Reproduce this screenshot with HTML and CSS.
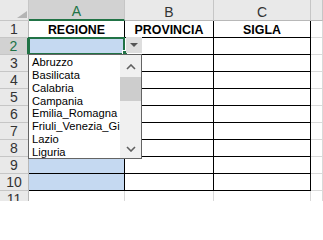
FILE: index.html
```html
<!DOCTYPE html>
<html>
<head>
<meta charset="utf-8">
<link rel="stylesheet" href="styles.css">
</head>
<body>
<div class="sheet">
  <div class="grid">
    <div class="hd corner"><span class="tri"></span></div>
    <div class="hd col sel">A</div>
    <div class="hd col">B</div>
    <div class="hd col">C</div>
    <div class="hd col last"></div>

    <div class="hd row">1</div><div class="c t th">REGIONE</div><div class="c t th">PROVINCIA</div><div class="c t th">SIGLA</div><div class="c"></div>
    <div class="hd row sel">2</div><div class="c t blue"></div><div class="c t"></div><div class="c t"></div><div class="c"></div>
    <div class="hd row">3</div><div class="c t blue"></div><div class="c t"></div><div class="c t"></div><div class="c"></div>
    <div class="hd row">4</div><div class="c t blue"></div><div class="c t"></div><div class="c t"></div><div class="c"></div>
    <div class="hd row">5</div><div class="c t blue"></div><div class="c t"></div><div class="c t"></div><div class="c"></div>
    <div class="hd row">6</div><div class="c t blue"></div><div class="c t"></div><div class="c t"></div><div class="c"></div>
    <div class="hd row">7</div><div class="c t blue"></div><div class="c t"></div><div class="c t"></div><div class="c"></div>
    <div class="hd row">8</div><div class="c t blue"></div><div class="c t"></div><div class="c t"></div><div class="c"></div>
    <div class="hd row">9</div><div class="c t blue"></div><div class="c t"></div><div class="c t"></div><div class="c"></div>
    <div class="hd row">10</div><div class="c t blue"></div><div class="c t"></div><div class="c t"></div><div class="c"></div>
    <div class="hd row">11</div><div class="c"></div><div class="c"></div><div class="c"></div><div class="c"></div>
  </div>

  <div class="selbox"></div>
  <div class="handle"></div>
  <div class="ddbtn"><span class="ddtri"></span></div>

  <div class="list">
    <div class="items">
      <div>Abruzzo</div>
      <div>Basilicata</div>
      <div>Calabria</div>
      <div>Campania</div>
      <div>Emilia_Romagna</div>
      <div>Friuli_Venezia_Gi</div>
      <div>Lazio</div>
      <div>Liguria</div>
    </div>
    <div class="sb">
      <div class="btn up"><svg width="10" height="6" viewBox="0 0 10 6"><polyline points="1,5 5,1 9,5" fill="none" stroke="#606060" stroke-width="1.6"/></svg></div>
      <div class="thumb"></div>
      <div class="track"></div>
      <div class="btn down"><svg width="10" height="6" viewBox="0 0 10 6"><polyline points="1,1 5,5 9,1" fill="none" stroke="#606060" stroke-width="1.6"/></svg></div>
    </div>
  </div>
</div>
</body>
</html>
```
FILE: styles.css
```css
body {
  margin: 0;
  overflow: hidden;
  background: #fff;
  font-family: "Liberation Sans", Arial, sans-serif;
}
.sheet {
  position: relative;
  width: 323px;
  height: 201px;
  overflow: hidden;
}
.grid {
  display: grid;
  grid-template-columns: 29px 96px 89px 97px 1fr;
  grid-template-rows: 21px repeat(11, 17px);
}
.grid > div {
  box-sizing: border-box;
  border-right: 1px solid #d9d9d9;
  border-bottom: 1px solid #d9d9d9;
}
.grid > .hd {
  background: #e9e9e9;
  border-right-color: #c6c6c6;
  border-bottom-color: #c6c6c6;
  color: #333;
  font-size: 14px;
  display: flex;
  justify-content: center;
  align-items: flex-end;
}
.grid > .col {
  border-bottom-color: #b8b8b8;
}
.grid > .row {
  border-right-color: #b8b8b8;
  line-height: 15px;
}
.grid > .corner {
  justify-content: flex-end;
  padding: 0 1px 2px 0;
}
.tri {
  width: 0;
  height: 0;
  border-left: 10px solid transparent;
  border-bottom: 7px solid #b4b4b4;
}
.grid > .hd.sel {
  background: #d2d2d2;
  color: #217346;
}
.grid > .col.sel {
  border-bottom: 2px solid #217346;
}
.grid > .row.sel {
  border-right: 2px solid #217346;
}
.grid > .c.t {
  border-right-color: #000;
  border-bottom-color: #000;
}
.blue {
  background: #c5d9f1;
}
.th {
  font-weight: bold;
  font-size: 12.4px;
  color: #000;
  display: flex;
  align-items: flex-end;
  justify-content: center;
}
.selbox {
  position: absolute;
  left: 28px;
  top: 37px;
  width: 97px;
  height: 18px;
  box-sizing: border-box;
  border: 2px solid #217346;
}
.handle {
  position: absolute;
  left: 122px;
  top: 50px;
  width: 5px;
  height: 5px;
  box-sizing: border-box;
  background: #217346;
  border-left: 1px solid #fff;
  border-top: 1px solid #fff;
}
.ddbtn {
  position: absolute;
  left: 126px;
  top: 37px;
  width: 16px;
  height: 16px;
  background: #dedede;
  display: flex;
  align-items: center;
  justify-content: center;
}
.ddtri {
  width: 0;
  height: 0;
  border-left: 4px solid transparent;
  border-right: 4px solid transparent;
  border-top: 4px solid #555;
}
.list {
  position: absolute;
  left: 28px;
  top: 54px;
  width: 114px;
  height: 105px;
  box-sizing: border-box;
  border: 1px solid #646464;
  background: #fff;
  display: flex;
}
.items {
  flex: 1;
  min-width: 0;
  overflow: hidden;
  white-space: nowrap;
  padding: 1px 0 0 3px;
  font-size: 11.2px;
  line-height: 12.85px;
  color: #000;
}
.sb {
  width: 21px;
  background: #f0f0f0;
  display: flex;
  flex-direction: column;
}
.btn {
  height: 22px;
  box-sizing: border-box;
  display: flex;
  align-items: center;
  justify-content: center;
}
.btn svg {
  display: block;
}
.btn.up {
  padding-top: 2px;
}
.btn.down {
  padding-top: 3px;
}
.thumb {
  height: 24px;
  background: #cdcdcd;
}
.track {
  flex: 1;
}
```
